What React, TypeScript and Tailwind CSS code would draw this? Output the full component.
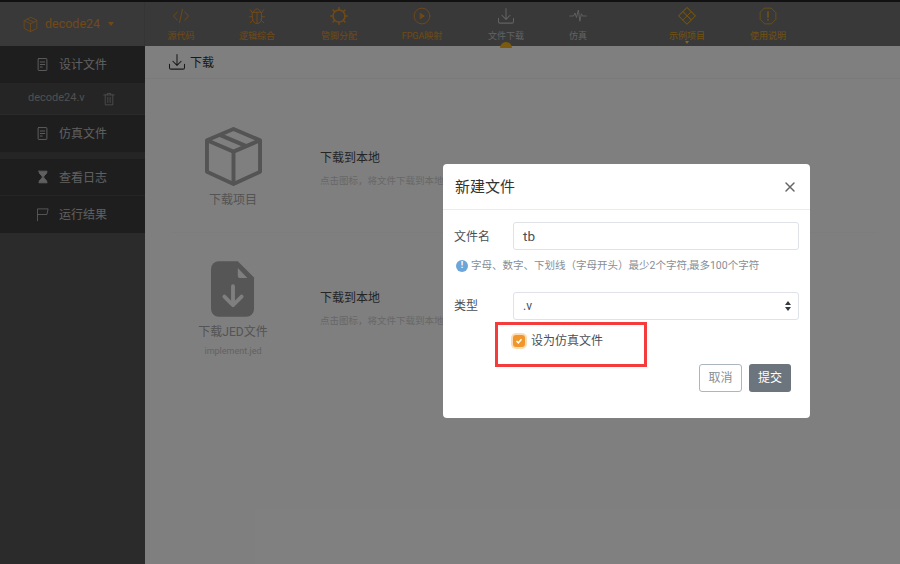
import React from "react";

const I = ({ s = 24, c = "", children, w = 2 }: { s?: number; c?: string; children: React.ReactNode; w?: number }) => (
  <svg width={s} height={s} viewBox="0 0 24 24" fill="none" stroke="currentColor" strokeWidth={w} strokeLinecap="round" strokeLinejoin="round" className={c}>
    {children}
  </svg>
);

const DownloadIcon = ({ s = 18, w = 1.4 }: { s?: number; w?: number }) => (
  <I s={s} w={w}>
    <path d="M12 2v14M6.500 11l5.500 5.500 5.500-5.500M2 15v4.500a2 2 0 0 0 2 2h16a2 2 0 0 0 2-2V15" />
  </I>
);

const DocIcon = () => (
  <I s={15} w={1.5}>
    <path d="M6 2.500h12a1 1 0 0 1 1 1v17a1 1 0 0 1-1 1H6a1 1 0 0 1-1-1v-17a1 1 0 0 1 1-1zM8.500 8h7M8.500 12h7M8.500 16h3" />
  </I>
);

type Item = { label: string; w: string; tone: string; active?: boolean; caret?: boolean; icon: React.ReactNode };

const navItems: Item[] = [
  { label: "源代码", w: "w-[72px]", tone: "text-[#e0922c]", icon: <I s={18} w={1.3}><path d="M7 6.500 2 12l5 5.500M17 6.500l5 5.500-5 5.500M14 3l-4 18" /></I> },
  { label: "逻辑综合", w: "w-[80px]", tone: "text-[#e0922c]", icon: <I s={18} w={1.3}><path d="M7.500 7c0-6 9-6 9 0M6 7h12v9a6 6 0 0 1-12 0zM12 7v15M3 3.500 6 8M21 3.500 18 8M2 13h4M22 13h-4M3 21l4-4M21 21l-4-4" /></I> },
  { label: "管脚分配", w: "w-[84px]", tone: "text-[#e0922c]", icon: <I s={18} w={2.100}><circle cx="12" cy="12" r="8" /><path d="M12 1v3M12 20v3M1 12h3M20 12h3M4.200 4.200l2.100 2.100M17.700 17.700l2.100 2.100M19.800 4.200l-2.100 2.100M6.300 17.700l-2.100 2.100" /></I> },
  { label: "FPGA映射", w: "w-[82px]", tone: "text-[#e0922c]", icon: <I s={18} w={1.2}><circle cx="12" cy="12" r="10.500" /><path d="m10 8.500 5 3.500-5 3.500z" fill="currentColor" /></I> },
  { label: "文件下载", w: "w-[86px]", tone: "text-[#c4c4c4]", active: true, icon: <DownloadIcon /> },
  { label: "仿真", w: "w-[58px]", tone: "text-[#c4c4c4]", icon: <I s={18} w={1.2}><path d="M1 12h5l2-4 2 6 2.500-10 2 15 2-10 1.500 3h5" /></I> },
];

const navRight: Item[] = [
  { label: "示例项目", w: "w-[80px]", tone: "text-[#e0a41e]", caret: true, icon: <I s={18} w={1.2}><path d="M12 1 23 12 12 23 1 12zM12 1 6.500 6.500 12 12l5.500-5.500zM6.500 6.500 1 12l5.500 5.500L12 12zM17.500 6.500 12 12l5.500 5.500L23 12zM12 12l-5.500 5.500L12 23l5.500-5.500z" /></I> },
  { label: "使用说明", w: "w-[82px]", tone: "text-[#e0a41e]", icon: <I s={18} w={1.2}><path d="M7.500 1.500h9l6 6v9l-6 6h-9l-6-6v-9z" /><path d="M12 6.500v7M12 16.800v.500" strokeWidth={2.200} /></I> },
];

const NavItem = ({ it }: { it: Item }) => (
  <div className={`${it.w} h-full relative flex flex-col items-center pt-[5px] ${it.tone}`}>
    {it.icon}
    <span className="text-[9px] leading-[12px] mt-[5px]">{it.label}</span>
    {it.active && <div className="absolute bottom-[-2px] left-1/2 -translate-x-1/2 w-[12px] h-[6px] rounded-t-full bg-[#f7b51c]" />}
    {it.caret && <div className="absolute bottom-[2px] left-1/2 -translate-x-1/2 w-0 h-0 border-x-[2.500px] border-x-transparent border-t-[3px] border-t-[#f7c85c]" />}
  </div>
);

const SideRow = ({ icon, label, border = false }: { icon: React.ReactNode; label: string; border?: boolean }) => (
  <div className={`h-[37px] flex items-center pl-[35px] gap-[9px] bg-[#3c3c3c] text-[#c0c0c0] text-[12px] ${border ? "border-b border-[#4a4a4a]" : ""}`}>
    <span className="w-[15px] flex justify-center">{icon}</span>
    <span className="pt-[1px]">{label}</span>
  </div>
);

const Row = ({ icon, label, sub, titleTop, border }: { icon: React.ReactNode; label: string; sub?: string; titleTop: string; border?: boolean }) => (
  <div className={`flex ml-[27px] mr-[21px] ${border ? "h-[154px] border-b border-[#fafafa]" : "h-[140px]"}`}>
    <div className="w-[122px] flex flex-col items-center shrink-0 text-[#a8a8a8]">
      {icon}
      <span className="text-[12px] leading-[16px]">{label}</span>
      {sub && <span className="text-[9px] leading-[12px] mt-[5px] text-[#c4c4c4]">{sub}</span>}
    </div>
    <div className={`ml-[26px] ${titleTop}`}>
      <div className="text-[12px] leading-[16px] text-[#4a4a4a]">下载到本地</div>
      <div className="text-[9.500px] leading-[14px] mt-[8px] text-[#cfcfcf] whitespace-nowrap">点击图标，将文件下载到本地</div>
    </div>
  </div>
);

export default function App() {
  return (
    <div className="relative w-[900px] h-[564px] overflow-hidden bg-white font-['Roboto','Noto_Sans_CJK_SC',sans-serif]">
      <header className="h-[46px] flex border-t-2 border-[#222] bg-[#727272]">
        <div className="w-[145px] shrink-0 flex items-center pl-[22px] text-[#e0922c] border-r border-[#6a6a6a]">
          <I s={17} w={1.200}><path d="M12 2 3 6.500v11L12 22l9-4.500v-11zM3 6.500 12 11l9-4.500M12 11v11M7.500 4.300l9 4.500" /></I>
          <span className="ml-[6px] text-[12.500px]">decode24</span>
          <span className="ml-[8px] w-0 h-0 border-x-[3px] border-x-transparent border-t-[4px] border-t-[#e0922c]" />
        </div>
        {navItems.map((it) => <NavItem key={it.label} it={it} />)}
        <div className="w-[40px]" />
        {navRight.map((it) => <NavItem key={it.label} it={it} />)}
      </header>
      <div className="flex h-[518px]">
        <aside className="w-[145px] shrink-0 bg-[#565656] flex flex-col">
          <SideRow icon={<DocIcon />} label="设计文件" />
          <div className="h-[32px] flex items-center pl-[28px] bg-[#4a4a4a] border-b border-[#525252] text-[#a0a0a0] text-[11px]">
            <span>decode24.v</span>
            <span className="ml-[17px] text-[#a0a0a0]"><I s={14} w={1.400}><path d="M3 5h18M9 5V2.500h6V5M5.500 5v17h13V5M10 9v9M14 9v9" /></I></span>
          </div>
          <SideRow icon={<DocIcon />} label="仿真文件" />
          <div className="h-[7px] bg-[#4a4a4a]" />
          <SideRow border icon={<I s={14} w={1.500}><path d="M5 2h14c0 6-6 7-6 10s6 4 6 10H5c0-6 6-7 6-10S5 8 5 2z" fill="currentColor" /></I>} label="查看日志" />
          <SideRow icon={<I s={15} w={1.300}><path d="M4 22V3h17l-2 9H4" /></I>} label="运行结果" />
        </aside>
        <main className="flex-1">
          <div className="h-[33px] flex items-center pl-[23px] gap-[4px] border-b border-[#f4f4f4] text-[#333] text-[12px]">
            <DownloadIcon s={18} w={1.400} />
            <span className="pt-[2px]">下载</span>
          </div>
          <Row border titleTop="pt-[71px]" label="下载项目" icon={
            <svg width="59" height="59" viewBox="0 0 60 60" fill="none" stroke="#a8a8a8" strokeWidth="4" strokeLinejoin="round" className="mt-[48px] mb-[6px]">
              <path d="M30 2 3 13.500v32L30 58l27-12.500v-32zM3 13.500 30 25l27-11.500M30 25v33M16 8l27 11.500" />
            </svg>
          } />
          <Row titleTop="pt-[57px]" label="下载JED文件" sub="implement.jed" icon={
            <svg width="44" height="58" viewBox="0 0 46 60" className="mt-[27px] mb-[6px]">
              <path fill="#adadad" d="M8 1h20l17 17v33a8 8 0 0 1-8 8H8a8 8 0 0 1-8-8V9a8 8 0 0 1 8-8z" />
              <path fill="#fff" d="M28 8 l10 10.500H31a3 3 0 0 1-3-3z" />
              <path fill="none" stroke="#fff" strokeWidth="4" strokeLinecap="round" strokeLinejoin="round" d="M23 27v19M14 38l9 9 9-9" />
            </svg>
          } />
        </main>
      </div>

      <div className="absolute inset-0 bg-black/50 pl-[443px] pt-[164px]">
        <div className="relative w-[367px] h-[254px] bg-white rounded-[4px] text-[#495057]">
          <div className="h-[46px] flex items-center justify-between pl-[12px] pr-[14px] border-b border-[#e9ecef]">
            <span className="text-[15px] text-[#333] pt-[1px]">新建文件</span>
            <span className="text-[#666]"><I s={12} w={3}><path d="M4 4l16 16M20 4 4 20" /></I></span>
          </div>
          <div className="flex items-center mt-[12px] pl-[11px]">
            <span className="w-[59px] text-[12px] pt-[2px]">文件名</span>
            <div className="w-[286px] h-[28px] border border-[#dfe3e7] rounded-[3px] flex items-center px-[9px] text-[13.500px]">tb</div>
          </div>
          <div className="flex items-center gap-[3px] mt-[8px] ml-[13px] text-[#868e96] text-[10.500px]">
            <span className="w-[12px] h-[12px] rounded-full bg-[#6ca6d9] text-white text-[9px] font-bold flex items-center justify-center">!</span>
            字母、数字、下划线（字母开头）最少2个字符,最多100个字符
          </div>
          <div className="flex items-center mt-[18px] pl-[11px]">
            <span className="w-[59px] text-[12px]">类型</span>
            <div className="w-[286px] h-[28px] border border-[#dfe3e7] rounded-[3px] flex items-center justify-between pl-[9px] pr-[7px] text-[12px]">
              <span>.v</span>
              <svg width="6" height="10" viewBox="0 0 6 10" fill="#343a40"><path d="M3 0 6 4H0zM3 10 0 6h6z" /></svg>
            </div>
          </div>
          <div className="flex items-center gap-[6px] mt-[12px] ml-[70px] text-[12px] text-[#495057]">
            <span className="w-[12px] h-[12px] rounded-[3px] bg-[#f0962a] flex items-center justify-center text-white shadow-[0_0_0_2px_#fbdcb5]">
              <svg width="8" height="8" viewBox="0 0 8 8" fill="none" stroke="currentColor" strokeWidth="1.500"><path d="M1.500 4 3.300 5.800 6.500 2.200" /></svg>
            </span>
            设为仿真文件
          </div>
          <div className="flex justify-end gap-[7px] mt-[14px] mr-[19px] text-[12px]">
            <button className="w-[43px] h-[28px] border border-[#adb5bd] rounded-[3px] text-[#868e96]">取消</button>
            <button className="w-[42px] h-[28px] rounded-[3px] bg-[#6c757d] text-white">提交</button>
          </div>
          <div className="absolute left-[52px] top-[158px] w-[152px] h-[45px] border-[3px] border-[#f53c3c]" />
        </div>
      </div>
    </div>
  );
}
